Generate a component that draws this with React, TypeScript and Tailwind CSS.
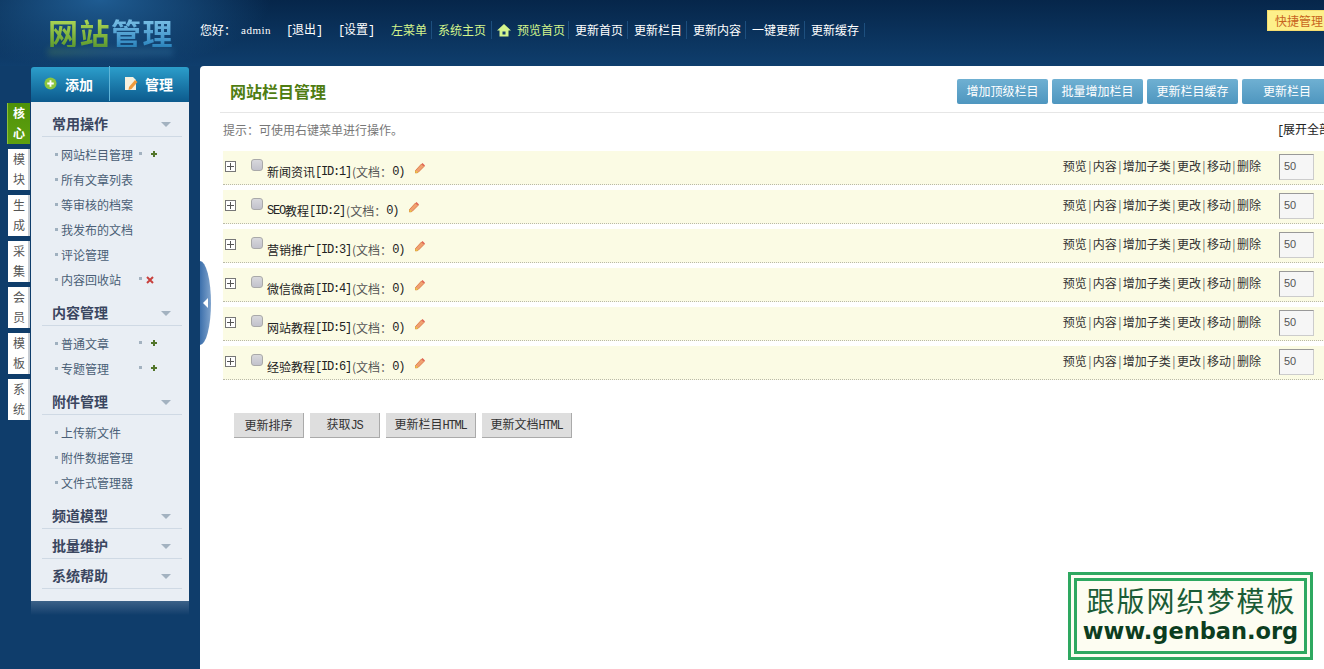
import { Fragment } from "react";

const cjk = "font-['Noto_Sans_CJK_SC','Liberation_Sans',sans-serif]";

const topLinks = ["更新首页", "更新栏目", "更新内容", "一键更新", "更新缓存"];
const sideTabs = ["核心", "模块", "生成", "采集", "会员", "模板", "系统"];
const topButtons = [
  { label: "增加顶级栏目", width: "w-[91px]" },
  { label: "批量增加栏目", width: "w-[91px]" },
  { label: "更新栏目缓存", width: "w-[91px]" },
  { label: "更新栏目", width: "w-[90px]" },
];
const rowOps = ["预览", "内容", "增加子类", "更改", "移动", "删除"];

type MenuItem = { label: string; mark?: "add" | "del" };

const sections: { title: string; items: MenuItem[]; gap: string }[] = [
  {
    title: "常用操作",
    gap: "pb-[4px]",
    items: [
      { label: "网站栏目管理", mark: "add" },
      { label: "所有文章列表" },
      { label: "等审核的档案" },
      { label: "我发布的文档" },
      { label: "评论管理" },
      { label: "内容回收站", mark: "del" },
    ],
  },
  {
    title: "内容管理",
    gap: "pb-[4px]",
    items: [
      { label: "普通文章", mark: "add" },
      { label: "专题管理", mark: "add" },
    ],
  },
  {
    title: "附件管理",
    gap: "pb-[4px]",
    items: [{ label: "上传新文件" }, { label: "附件数据管理" }, { label: "文件式管理器" }],
  },
  { title: "频道模型", gap: "", items: [] },
  { title: "批量维护", gap: "", items: [] },
  { title: "系统帮助", gap: "", items: [] },
];

const rows = [
  { name: "新闻资讯", id: 1 },
  { name: "SEO教程", id: 2 },
  { name: "营销推广", id: 3 },
  { name: "微信微商", id: 4 },
  { name: "网站教程", id: 5 },
  { name: "经验教程", id: 6 },
];

// latin in the original is a half-width bitmap face, 6px per char at 12px
function Mono({ children }: { children: React.ReactNode }) {
  return <span className="font-['Liberation_Mono',monospace] text-[12px] font-normal tracking-[-1.2px]">{children}</span>;
}

function Pencil() {
  return (
    <svg viewBox="0 0 12 12" className="h-[12px] w-[12px]">
      <path d="M1.5 8.5 L7.5 2 L10 4.5 L4 10.5 L1.5 11 Z" fill="#f0a070" stroke="#d8703c" strokeWidth="0.8" />
      <path d="M7.5 2 L8.5 1 L11 3.5 L10 4.5 Z" fill="#e06050" />
      <path d="M1.5 8.5 L4 10.5 L1.5 11 Z" fill="#e8d040" />
    </svg>
  );
}

function Header() {
  return (
    <header className="relative flex h-[66px] shrink-0 items-center overflow-hidden bg-[radial-gradient(ellipse_170px_70px_at_100px_0px,#1f5c92_0%,rgba(31,92,146,0)_100%),linear-gradient(180deg,#06264a_0%,#0f3e6d_100%)]">
      <div className="relative ml-[48px] w-[152px] shrink-0 -translate-y-[1px]">
        <div className="flex h-[36px] items-center text-[30px] leading-none font-bold tracking-[1.5px]">
          <span className="bg-gradient-to-b from-[#b4dc5a] to-[#5f9c2c] bg-clip-text text-transparent">网站</span>
          <span className="bg-gradient-to-b from-[#7fc4e8] to-[#2a86c0] bg-clip-text text-transparent">管理</span>
        </div>
        <div className="absolute top-[34px] left-0 h-[8px] w-[125px] bg-gradient-to-r from-[#4f7f50] via-[#3a6f90] to-[#2f6f9c] opacity-40 blur-[3px]" />
      </div>
      <nav className="flex items-center pb-[6px] text-[12px] text-white">
        <span>您好：</span>
        <span className="ml-[5px] w-[45px] font-['Liberation_Serif',serif] text-[11px] tracking-[0.5px]">admin</span>
        <span className="w-[52px]">
          <Mono>[</Mono>退出<Mono>]</Mono>
        </span>
        <span className="w-[53px]">
          <Mono>[</Mono>设置<Mono>]</Mono>
        </span>
        <span className="w-[40px] text-[#d4f58c]">左菜单</span>
        <span className="border-l border-[#1d4f7e] pl-[6px] text-[#d4f58c]">系统主页</span>
        <span className="mr-[-1px] ml-[5px] flex items-center gap-[6px] border-l border-[#1d4f7e] pl-[5px] text-[#d4f58c]">
          <svg viewBox="0 0 14 13" className="h-[13px] w-[14px]">
            <path d="M7 0 L14 6.5 L11.5 6.5 L11.5 12.5 L2.5 12.5 L2.5 6.5 L0 6.5 Z" fill="#d4f58c" />
            <rect x="5.5" y="7.5" width="3" height="3" fill="#14406c" />
          </svg>
          预览首页
        </span>
        {topLinks.map((l) => (
          <span key={l} className="ml-[4px] border-l border-[#1d4f7e] pl-[6px]">
            {l}
          </span>
        ))}
        <span className="ml-[5px] h-[14px] border-l border-[#1d4f7e]" />
      </nav>
      <div className="absolute top-[10px] left-[1267px] h-[21px] w-[80px] border border-[#f5dd70] bg-[#fdf08a] pl-[7px] text-[12px] leading-[19px] whitespace-nowrap text-[#c8641e]">
        快捷管理
      </div>
    </header>
  );
}

function Sidebar() {
  return (
    <aside className="flex w-[200px] shrink-0 bg-[#0f3d6b]">
      <div className="mt-[37px] ml-[8px] flex w-[22px] shrink-0 flex-col gap-[5px]">
        {sideTabs.map((t, i) => (
          <div
            key={t}
            className={
              i === 0
                ? "-ml-[1px] h-[41px] w-[23px] border-l border-[#8fbf3c] bg-gradient-to-b from-[#4e9208] to-[#5fa010] text-center text-[12px] leading-[20px] font-bold text-white"
                : "h-[41px] bg-white text-center text-[12px] leading-[20px] text-[#555] shadow-[inset_-2px_0_0_#c9ced4]"
            }
          >
            {t.split("").map((c) => (
              <div key={c}>{c}</div>
            ))}
          </div>
        ))}
      </div>
      <div className="mt-[1px] ml-[1px] flex w-[158px] flex-col">
        <div className="flex h-[35px] items-center rounded-t-[3px] bg-gradient-to-b from-[#2c9ecb] to-[#0c5a8d] pb-[2px] text-[14px] leading-none font-bold text-white">
          <div className="flex h-[35px] w-[79px] items-center gap-[8px] border-r border-[#5fb4d8] pl-[13px]">
            <svg viewBox="0 0 14 14" className="h-[13px] w-[13px]">
              <circle cx="7" cy="7" r="6.5" fill="#8cc63f" />
              <path d="M7 3.5v7M3.5 7h7" stroke="#fff" strokeWidth="2" />
            </svg>
            添加
          </div>
          <div className="flex flex-1 items-center gap-[7px] pl-[14px]">
            <svg viewBox="0 0 14 15" className="h-[15px] w-[14px]">
              <path d="M1 1h8l3 3v10H1z" fill="#f6f1df" />
              <path d="M5 11 L11 4 L13.5 6 L7.5 13 L4.5 14 Z" fill="#ee9a3c" />
            </svg>
            管理
          </div>
        </div>
        <div className="bg-[#e9eef4] pt-[5px] pr-[7px] pb-[12px] pl-[11px]">
          {sections.map((s) => (
            <div key={s.title} className={s.gap}>
              <div className="flex h-[30px] items-end justify-between border-b border-[#cfd9e4] pr-[11px] pb-[3px] pl-[10px] text-[14px] leading-[20px] font-bold text-[#3a4660]">
                {s.title}
                <span className="mb-[6px] h-0 w-0 border-x-[5px] border-t-[5px] border-x-transparent border-t-[#a3b2c0]" />
              </div>
              {s.items.length > 0 && (
                <ul className="pt-[5px]">
                  {s.items.map((it) => (
                    <li key={it.label} className="flex h-[25px] items-center pl-[13px] text-[12px] text-[#4a5e76]">
                      <span className="mr-[3px] h-[3px] w-[3px] bg-[#9fb0bf]" />
                      <span className="w-[78px]">{it.label}</span>
                      {it.mark && <span className="h-[3px] w-[3px] -translate-y-[1px] bg-[#a3b2c0]" />}
                      {it.mark === "add" && (
                        <svg viewBox="0 0 8 8" className="ml-[8px] h-[8px] w-[8px] -translate-y-[1px]">
                          <path d="M4 1v6M1 4h6" stroke="#52752a" strokeWidth="2" />
                        </svg>
                      )}
                      {it.mark === "del" && (
                        <svg viewBox="0 0 8 8" className="ml-[4px] h-[8px] w-[8px]">
                          <path d="M1 1l6 6M7 1l-6 6" stroke="#c8403c" strokeWidth="2" />
                        </svg>
                      )}
                    </li>
                  ))}
                </ul>
              )}
            </div>
          ))}
        </div>
        <div className="h-[14px] bg-gradient-to-b from-[#3c6288] to-[#0f3d6b]" />
      </div>
    </aside>
  );
}

function CategoryRow({ name, id }: { name: string; id: number }) {
  const isLatin = name.startsWith("SEO");
  return (
    <div className="flex h-[34px] items-center border-b border-dotted border-[#b9b9a8] bg-[#fbfbe4] text-[12px] text-[#333]">
      <span className="relative ml-[2px] h-[11px] w-[11px] -translate-y-[1px] border border-[#777] bg-white">
        <span className="absolute top-[4px] left-[1px] h-px w-[7px] bg-[#555]" />
        <span className="absolute top-[1px] left-[4px] h-[7px] w-px bg-[#555]" />
      </span>
      <span className="ml-[15px] h-[12px] w-[12px] -translate-y-[3px] rounded-[3px] border border-[#a9a9a9] bg-gradient-to-b from-[#d8d8dc] to-[#c2c2cc]" />
      <span className="ml-[4px] flex translate-y-[4px] items-center text-[#222]">
        {isLatin ? (
          <Fragment>
            <Mono>SEO</Mono>教程
          </Fragment>
        ) : (
          name
        )}
        <Mono>[ID:{id}]</Mono>
        <span className="ml-[1px] text-[#555]">(文档：</span>
        <Mono>0)</Mono>
      </span>
      <span className="ml-[10px]">
        <Pencil />
      </span>
      <div className="ml-auto flex -translate-y-[2px] items-center">
        {rowOps.map((op, i) => (
          <Fragment key={op}>
            {i > 0 && <span className="mx-[1.4px] text-[#666]">|</span>}
            <span>{op}</span>
          </Fragment>
        ))}
      </div>
      <span className="mr-[33px] ml-[18px] flex h-[26px] w-[35px] -translate-y-[1px] items-center border border-[#ccc] border-t-[#999] border-l-[#999] bg-[#f6f6f6] pl-[4px] font-['Liberation_Sans',sans-serif] text-[11px] text-[#555]">
        50
      </span>
    </div>
  );
}

function Main() {
  return (
    <main className="relative min-w-0 flex-1 overflow-hidden rounded-tl-[4px] bg-white">
      <div className="ml-[20px] flex h-[47px] w-[1150px] items-center justify-between border-b border-[#e6e6e6] pl-[10px]">
        <h1 className="translate-y-[2px] text-[16px] font-bold text-[#4f7d12]">网站栏目管理</h1>
        <div className="mr-[38px] flex translate-y-[2px] gap-[4px]">
          {topButtons.map((b) => (
            <span
              key={b.label}
              className={`${b.width} h-[25px] rounded-[2px] bg-gradient-to-b from-[#6fb0d2] to-[#4e96bf] text-center text-[12px] leading-[24px] text-white`}
            >
              {b.label}
            </span>
          ))}
        </div>
      </div>
      <div className="w-[1124px] pl-[23px]">
        <div className="flex h-[38px] items-center justify-between pb-[4px] text-[12px]">
          <span className="text-[#777]">提示：可使用右键菜单进行操作。</span>
          <span className="mr-[-8px] w-[55px] overflow-hidden whitespace-nowrap text-[#222]">
            <Mono>[</Mono>展开全部<Mono>]</Mono>
          </span>
        </div>
      </div>
      <div className="ml-[23px] flex w-[1124px] flex-col gap-[5px]">
        {rows.map((r) => (
          <CategoryRow key={r.id} name={r.name} id={r.id} />
        ))}
      </div>
      <div className="mt-[33px] ml-[34px] flex gap-[6px] text-[12px] text-[#333]">
        <BottomButton width="w-[70px]">更新排序</BottomButton>
        <BottomButton width="w-[70px]">
          获取<Mono>JS</Mono>
        </BottomButton>
        <BottomButton width="w-[90px]">
          更新栏目<Mono>HTML</Mono>
        </BottomButton>
        <BottomButton width="w-[90px]">
          更新文档<Mono>HTML</Mono>
        </BottomButton>
      </div>
      {/* collapse handle on the sidebar edge */}
      <div className="absolute top-[195px] left-0 flex h-[84px] w-[11px] items-center rounded-r-[11px_42px] bg-gradient-to-r from-[#3c70ac] to-[#7fa3cc] pl-[3px]">
        <span className="h-0 w-0 border-y-[5px] border-r-[5px] border-y-transparent border-r-white" />
      </div>
      {/* site watermark */}
      <div className="absolute top-[506px] left-[868px] flex h-[88px] w-[245px] border-[3px] border-[#2ea860] bg-[#fdfdf2] p-[3px]">
        <div className="flex flex-1 flex-col items-center justify-center gap-[3px] border-[3px] border-[#2ea860] pb-[5px] text-[#1a5c36]">
          <div className="ml-[2px] text-[28px] leading-[32px] tracking-[2px]">跟版网织梦模板</div>
          <div className="font-['DejaVu_Sans',sans-serif] text-[22.5px] leading-[24px] font-bold text-[#0c3d20]">www.genban.org</div>
        </div>
      </div>
    </main>
  );
}

function BottomButton({ width, children }: { width: string; children: React.ReactNode }) {
  return (
    <span className={`${width} flex h-[25px] items-center justify-center border-r border-b border-[#aaa] bg-[#dedede]`}>
      <span>{children}</span>
    </span>
  );
}

export default function App() {
  return (
    <div className={`${cjk} flex h-screen flex-col overflow-hidden bg-[#0f3d6b]`}>
      <Header />
      <div className="flex min-h-0 flex-1">
        <Sidebar />
        <Main />
      </div>
    </div>
  );
}
